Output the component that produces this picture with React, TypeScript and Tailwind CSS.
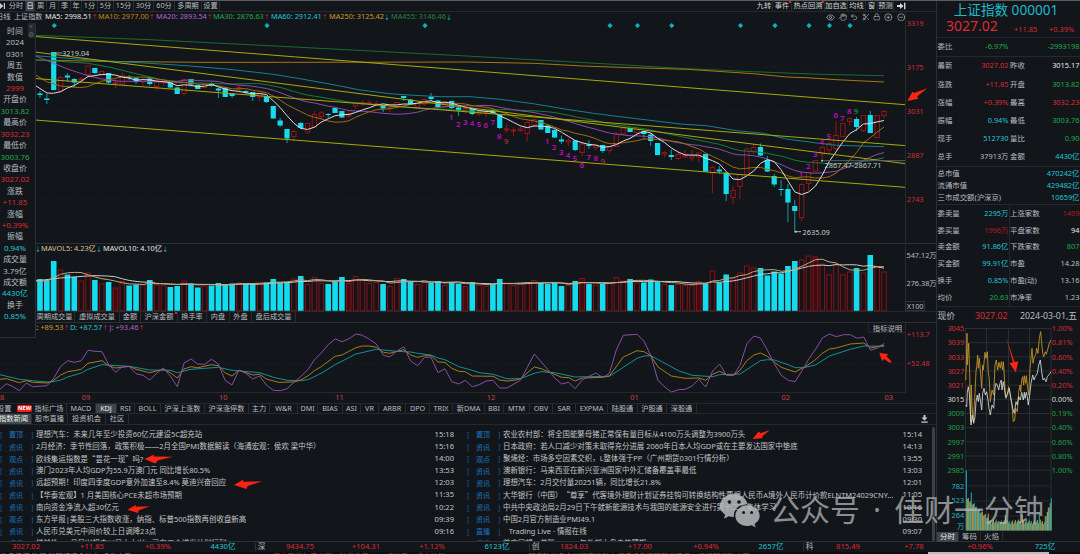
import React from "react";
import clsx from "clsx";
import { CircleMinus, CirclePlus, Eye, Hand, Lock, Scissors, Undo2 } from "lucide-react";

type Point = [number, number];
// [kind, bodyTop, bodyBottom, high, low, volumeTop]
type Candle = ["u" | "d", number, number, number, number, number];

const STEP = 6.862;
const FIRST = -3;
const xOf = (i: number) => 53.7 + (i + FIRST) * STEP;

const candles: Candle[] = [
  ["d", 84, 96, 84, 96, 282], ["d", 93.5, 95, 91, 98, 279], ["d", 98.5, 100, 94, 104, 280],
  ["d", 52, 90, 52, 90, 261], ["u", 77.5, 91, 76, 92, 269.5], ["d", 75.5, 77.5, 73, 82, 274.5],
  ["d", 79, 82.5, 78, 87, 277], ["u", 79, 80, 77, 83, 280.5], ["u", 66, 74.5, 66, 75, 272.5],
  ["d", 68, 73, 68, 74, 280], ["u", 71.5, 75, 71, 75, 283.5], ["d", 73, 82.5, 73, 84, 282],
  ["u", 82.5, 83.5, 79, 88.5, 287.5], ["u", 76, 84, 72.5, 86, 281], ["d", 77, 78, 75, 80, 285.5],
  ["d", 78, 82, 77, 84, 284.5], ["u", 79.5, 82, 78, 86, 284.5], ["d", 78.5, 84, 77, 86, 280],
  ["u", 82, 86.5, 79, 90.5, 284.5], ["u", 81, 83, 80, 86, 284.5], ["d", 82.5, 87.5, 82, 88, 287],
  ["d", 87.5, 94, 87, 94, 286], ["u", 79.5, 93.5, 79, 95.5, 280.5], ["d", 79, 84.5, 79, 86.5, 283.5],
  ["d", 85, 89, 85, 89, 287.5], ["u", 83.5, 87.5, 83, 88, 285.5], ["d", 83.5, 86, 82, 87, 285.5],
  ["d", 88.5, 90.5, 87, 98, 283], ["d", 87.5, 97, 87, 97, 284.5], ["d", 93.5, 96, 93, 98, 283.5],
  ["u", 87.5, 89.5, 86, 92, 282.5], ["d", 91, 92.5, 90, 94, 284], ["d", 92, 97, 92, 101, 283],
  ["u", 94, 97, 93, 101, 283], ["d", 96, 102, 96, 103, 282.5], ["d", 106, 118.5, 106, 118.5, 279],
  ["d", 120.5, 125.5, 118, 127, 283], ["d", 129, 138.5, 129, 143, 282], ["u", 131.5, 136.5, 130, 141, 278.5],
  ["d", 123, 128, 122, 129, 276], ["u", 123.5, 132, 123, 134, 284], ["u", 114.5, 127, 111, 128, 277],
  ["u", 113, 116.5, 111, 119, 283], ["d", 114, 115, 113, 118, 284], ["d", 108, 113, 108, 113, 281],
  ["d", 111, 117.5, 111, 118, 277], ["u", 114, 116, 110, 118, 283], ["u", 102.5, 106, 102, 109, 276],
  ["u", 102.5, 104, 100, 106, 280], ["u", 102.5, 103.5, 100, 105, 283], ["u", 103.5, 105, 101, 106, 282],
  ["d", 105.5, 108.5, 105, 112, 284], ["u", 107.5, 108.5, 106, 112, 286], ["u", 102.5, 107, 102, 107, 278],
  ["d", 96, 98, 96, 101, 279], ["d", 99.5, 104, 99, 104, 281], ["u", 103.5, 107, 103, 108, 284],
  ["u", 99.5, 104, 98, 106, 282], ["d", 96.5, 99, 93, 101, 283], ["d", 100.5, 107, 100, 107, 281],
  ["u", 102, 107, 101, 108, 285], ["d", 101, 108, 101, 109, 282], ["d", 107.5, 110.5, 107, 116, 284],
  ["u", 108.5, 110, 106, 114, 286], ["d", 108, 114, 108, 115, 282], ["u", 112, 114, 111, 116, 285],
  ["u", 112, 113, 109, 117, 286], ["d", 110.5, 113, 109, 114, 284], ["d", 115, 128, 115, 129, 279],
  ["u", 129, 130, 124, 133, 283], ["u", 130, 131, 127, 136, 285], ["u", 129, 130.5, 127, 132, 284],
  ["u", 122.5, 133.5, 121.5, 141.5, 282], ["u", 119.5, 125, 119, 126, 280], ["d", 120, 129.5, 120, 130, 283],
  ["d", 125.5, 133, 125, 133, 284], ["d", 130, 137.5, 129, 138, 283], ["d", 139.5, 141.5, 135.5, 144, 286],
  ["u", 140.5, 142, 138, 146, 285], ["d", 140.5, 150, 140, 151, 281], ["u", 144, 152.5, 143, 156, 278],
  ["d", 144.5, 146, 140, 149, 284], ["u", 145, 147.5, 144, 150, 285], ["d", 145, 151, 145, 153, 284],
  ["u", 147, 150.5, 146, 153.5, 283], ["u", 134, 146.5, 132, 147, 277], ["u", 128, 134, 127, 135, 280.5],
  ["d", 128, 132, 127, 132, 279], ["u", 129.5, 132.5, 129, 134, 282.5], ["d", 131, 134, 131, 139, 282.5],
  ["d", 134.5, 141, 133, 146, 279.5], ["d", 143, 155, 143, 155, 282], ["u", 152.5, 154, 151, 157, 284],
  ["d", 155, 157, 149.5, 160, 285], ["u", 154.5, 158.5, 153, 160, 284], ["u", 155.5, 157, 150, 158, 285],
  ["u", 156, 158, 150, 161, 285], ["u", 153, 157, 152, 162, 281], ["d", 154, 171.5, 154, 172, 283.5],
  ["u", 167.5, 173, 166, 193, 270.5], ["d", 169.5, 171.5, 166, 174, 282.5], ["d", 172.5, 194, 172, 201, 274.5],
  ["u", 190.5, 197.5, 186, 204, 278], ["u", 174.5, 186.5, 174, 199, 272.5], ["u", 149, 174.5, 148, 175, 265.5],
  ["u", 147.5, 151, 144, 154, 267.5], ["d", 147, 155.5, 143.5, 156, 268], ["d", 160, 171.5, 156, 172, 275.5],
  ["d", 176, 184.5, 174, 187, 271.5], ["d", 189, 190, 180, 196, 273.5], ["d", 189, 202.5, 184, 222, 266],
  ["d", 206, 211, 200, 231.5, 261], ["u", 184.5, 217.5, 183, 221, 259.5], ["u", 172.5, 183.5, 172, 190.5, 255.5],
  ["u", 160.5, 171, 160, 172, 256.5], ["u", 147.5, 154, 146, 160, 263.5], ["u", 143.5, 150, 142, 154, 274.5],
  ["u", 135.5, 148.5, 121, 150, 264.5], ["u", 123.5, 136.5, 123, 137, 274.5], ["u", 118.5, 121.5, 117, 126, 271.5],
  ["d", 119, 127, 117, 131, 268], ["u", 115.5, 130.5, 115, 132, 272.5], ["d", 115, 133, 111, 133, 255],
  ["u", 115.5, 137.5, 115, 138, 266.5], ["u", 111.5, 115.5, 110, 119, 271.5],
];

const closes = candles.map((c) => (c[0] === "u" ? c[1] : c[2]));
const volumes = candles.map((c) => c[5]);

// moving average; `head` holds the stretch that needs older data
const average = (values: number[], n: number, head: Point[]): Point[] => [
  ...head,
  ...values
    .map((_, i): Point => {
      const part = values.slice(Math.max(0, i - n + 1), i + 1);
      return [xOf(i), part.reduce((a, b) => a + b, 0) / part.length];
    })
    .slice(n - 1),
];

const line = (points: Point[]) => points.map(([x, y]) => `${x.toFixed(1)},${y.toFixed(1)}`).join(" ");

const pts = (s: string, ox: number, oy: number, sx = 3, sy = 3): Point[] =>
  s.split(" ").map((p) => {
    const [x, y] = p.split(",").map(Number);
    return [ox + x / sx, oy + y / sy];
  });

const averages = [
  { color: "#1b6a33", data: pts("105,106 450,119 900,142 1400,168 1860,194 2060,206 2260,215 2460,223 2652,227", 0, 0) },
  { color: "#a5760f", data: pts("105,180 300,184 600,187 900,187 1400,186 1600,190 1750,198 1860,202 2060,208 2260,221 2360,231 2420,233 2510,239 2652,246", 0, 0) },
  { color: "#14808f", data: pts("105,167 300,182 420,188 560,197 700,209 820,223 900,236 1010,256 1080,270 1170,281 1240,286 1320,290 1410,290 1500,298 1600,311 1700,328 1780,340 1860,350 1950,361 2040,372 2120,377 2210,392 2290,400 2360,417 2450,429 2510,436 2652,440", 0, 0) },
  { color: "#167d39", data: average(closes, 30, pts("105,180 180,184 264,190 330,202 400,219 480,238 540,246 570,248 590,249", 0, 0)) },
  { color: "#8a4ca8", data: average(closes, 20, pts("105,167 161,190 200,206 260,226 300,236 360,244 430,244", 0, 0)) },
  { color: "#a36a0c", data: average(closes, 10, pts("105,224 140,245 182,258 240,263 262,260", 0, 0)).filter((_, i) => i !== 5) },
  { color: "#dcdcdc", data: average(closes, 5, pts("105,256 141,279 160,280", 0, 0)) },
];

const trendLines = [
  [36.5, 104.7],
  [52, 163.6],
  [78.5, 145.6],
  [120, 187.3],
];

const counts: [string, number, number, string?][] = [
  ["1", 451.3, 117], ["2", 458.3, 123.7], ["3", 465.3, 122], ["4", 472, 123], ["5", 479, 124], ["6", 485.7, 125],
  ["7", 492.7, 122], ["8", 499.3, 136.3], ["9", 506.3, 140.7, "#b5313a"],
  ["1", 547.3, 140.7], ["2", 554.3, 146.7], ["3", 561.3, 151.7], ["4", 568, 155], ["5", 575, 158.3], ["6", 582, 164.7],
  ["7", 588.7, 156.7], ["8", 595.7, 157.7], ["9", 602.7, 161, "#b5313a"],
  ["1", 801, 174], ["2", 808.3, 166], ["3", 815.3, 154.3], ["4", 821.7, 142], ["5", 828.7, 136], ["6", 835.7, 115.3],
  ["7", 842.3, 117.7], ["8", 849.3, 111.3], ["9", 856, 111.3, "#1c9a45"],
];

const diamonds = [54.3, 267, 425, 610, 637.5, 671.7, 740.5, 775, 809, 829.5, 850];

const kdj = [
  {
    color: "#12909c",
    data: [
      ...pts("0,194 58,208 98,212 150,217 182,210 203,201 244,189 264,178 306,164 388,169 449,180 511,181 532,188 573,178 655,172 696,181 779,188 820,202 861,211 900,212", 0, 310),
      ...pts("20,209 52,190 86,164 137,132 187,118 237,124 271,126 288,130 321,135 338,144 355,149 389,170 422,181 439,188 473,193 507,206 540,206 574,190 591,185 624,188 674,201 758,199 792,172 826,145 843,138 860,137 894,160 927,182 961,196 1011,200 1028,194 1078,192 1112,165 1128,152 1145,149 1162,150 1196,164 1213,173 1235,173 1264,164 1297,138 1348,118 1381,108 1431,109", 300, 310, 2.45),
    ],
  },
  {
    color: "#a67d1c",
    data: [
      ...pts("0,208 20,206 58,218 79,212 98,217 141,219 161,211 182,195 203,185 223,182 244,178 264,160 306,152 326,167 347,174 388,169 408,178 449,188 490,178 511,188 532,204 552,177 573,170 593,173 634,164 655,167 676,189 696,198 717,181 758,195 779,193 799,207 835,217 882,216 900,211", 0, 310),
      ...pts("20,197 35,182 52,170 86,139 103,135 137,113 153,108 170,108 187,112 204,127 220,130 254,119 271,135 288,142 305,137 321,137 338,156 355,157 372,175 389,184 405,185 422,198 473,199 489,210 507,213 530,210 540,206 574,171 591,176 641,202 658,203 674,213 692,204 742,202 758,198 792,141 826,122 843,125 860,138 877,171 910,198 944,205 977,204 994,211 1011,193 1028,184 1045,194 1062,196 1078,181 1095,152 1112,135 1128,129 1145,139 1162,156 1179,172 1213,186 1247,163 1264,148 1280,130 1297,117 1314,114 1348,102 1381,99 1398,114 1431,106", 300, 310, 2.45),
    ],
  },
  {
    color: "#8a4ca8",
    data: [
      ...pts("0,238 19,221 37,229 58,242 79,219 98,230 141,227 161,205 182,169 203,152 223,157 244,152 264,121 285,124 306,125 326,164 347,187 367,170 388,170 408,191 429,196 449,210 470,190 490,174 511,198 532,230 552,159 573,147 593,162 614,163 634,148 655,162 676,212 696,225 717,180 737,190 758,207 779,198 799,225 820,241 841,242 861,236 882,217 900,202", 0, 310),
      ...pts("20,178 35,150 52,129 69,104 86,87 103,95 120,86 137,72 153,76 170,88 187,102 204,136 220,141 237,124 254,110 271,153 288,167 305,142 321,142 338,188 355,176 372,215 389,222 405,211 422,230 439,224 456,213 473,211 489,234 507,234 540,211 557,172 574,132 608,180 624,204 641,222 658,217 674,236 692,209 725,189 742,203 758,190 775,120 792,76 826,73 843,94 860,138 877,212 894,231 910,246 927,239 944,238 961,228 977,208 994,231 1011,183 1028,162 1045,196 1062,196 1078,166 1095,101 1112,78 1128,84 1145,120 1162,161 1179,196 1196,211 1213,215 1230,182 1247,146 1264,116 1280,84 1297,72 1314,80 1331,74 1348,74 1365,85 1381,81 1398,121 1415,114 1431,100", 300, 310, 2.45),
    ],
  },
];

const months: [string, number][] = [
  ["8", 2], ["09", 86], ["10", 223.3], ["11", 339.6], ["12", 491], ["01", 634.5], ["02", 785.7], ["03", 888.7],
];

const dayIndex = pts("107,225 109,180 111,85 112,180 114,150 116,115 119,210 122,350 124,240 126,300 130,350 134,280 138,200 140,185 143,150 145,190 148,160 151,195 155,250 158,180 160,195 165,142 168,160 172,140 175,200 178,225 181,290 186,255 191,270 195,180 199,165 203,195 207,172 211,190 214,170 218,195 220,170 223,210 226,275 231,270 236,245 240,265 245,290 250,350 254,345 257,310 262,320 266,260 270,240 272,260 275,225 278,215 281,240 283,212 287,235 289,212 291,230 296,270 300,190 303,160 306,130 309,175 313,155 317,150 320,130 324,145 328,100 332,80 335,115 338,145 341,155 346,140 349,148 354,130 358,115 363,105", 930, 305);
const dayPrice = pts("107,300 110,305 112,262 115,245 118,265 120,300 123,360 127,330 131,355 135,335 138,290 142,270 145,290 148,265 151,285 155,315 158,265 162,250 166,270 170,260 174,285 177,310 181,330 186,300 191,310 195,250 198,235 202,240 206,255 210,235 214,225 216,255 220,230 224,255 228,280 233,265 238,250 243,285 248,310 253,325 258,290 262,300 266,275 271,285 275,262 280,285 283,262 285,280 289,262 292,275 295,300 299,270 303,235 308,210 312,225 316,215 322,205 326,180 331,165 335,200 339,225 343,220 348,230 352,215 358,208 363,200", 930, 305);

const dayScale: [string, string][] = [
  ["3045", "1.00%"], ["3039", "0.81%"], ["3033", "0.60%"], ["3027", "0.40%"], ["3021", "0.20%"], ["3015", "0.00%"],
  ["3009", "0.19%"], ["3003", "0.40%"], ["2997", "0.60%"], ["2991", "0.80%"], ["2985", "1.00%"],
];

const dayVolumes = Array.from({ length: 86 }, (_, i) => {
  if (i === 0) return 60;
  const base = i < 24 ? 31 - i * 1.0 : i > 78 ? 8 + (i - 78) * 2.8 : 6.5;
  return base + ((i * 37) % 11) * 0.45 + (i % 17 === 5 ? 8 : 0);
});

const RED = "text-[#dd2932]";
const GREEN = "text-[#1dab4b]";
const CYAN = "text-[#23c4d4]";
const GRAY = "text-[#b9bdc0]";
const WHITE = "text-[#e4e6e7]";

const periods: [string, string][] = [
  ["分时", "w-[19px]"], ["日", "w-[9px]"], ["周", "w-[12px]"], ["月", "w-[12px]"], ["季", "w-[12px]"], ["年", "w-[11px]"],
  ["1分", "w-[16px]"], ["5分", "w-[16px]"], ["15分", "w-[20px]"], ["30分", "w-[20px]"], ["60分", "w-[21px]"],
  ["多周期", "w-[27px]"], ["设置", "w-[18px]"],
];

const tools: [string, string, boolean?][] = [
  ["九转", "w-[17px]"], ["事件", "w-[19px]", true], ["热点回溯", "w-[33px]", true], ["加自选", "w-[23px]"], ["均线", "w-[18px]"],
  ["窗", "w-[12px]"], ["预测", "w-[16px]"],
];

const legend: [string, string, string, string][] = [
  ["MA5: 2998.51", "↑", "text-[#e4e6e7]", "w-[53px]"],
  ["MA10: 2977.00", "↑", "text-[#c9840f]", "w-[58px]"],
  ["MA20: 2893.54", "↑", "text-[#b263d4]", "w-[57px]"],
  ["MA30: 2876.63", "↑", "text-[#1dab4b]", "w-[58px]"],
  ["MA60: 2912.41", "↑", "text-[#23c4d4]", "w-[58px]"],
  ["MA250: 3125.42", "↓", "text-[#d39a26]", "w-[62px]"],
  ["MA455: 3146.46", "↓", "text-[#1f8640]", "w-[70px]"],
];

const cursorInfo: [string, string][] = [
  ["时间", GRAY], ["2024", GRAY], ["0301", GRAY], ["周五", GRAY], ["数值", GRAY], ["2999", RED],
  ["开盘价", GRAY], ["3013.82", GREEN], ["最高价", GRAY], ["3032.23", RED], ["最低价", GRAY], ["3003.76", GREEN],
  ["收盘价", GRAY], ["3027.02", RED], ["涨跌", GRAY], ["+11.85", RED], ["涨幅", GRAY], ["+0.39%", RED],
  ["振幅", GRAY], ["0.94%", CYAN], ["成交量", GRAY], ["3.79亿", GRAY], ["成交额", GRAY], ["4430亿", CYAN],
  ["换手", GRAY], ["0.85%", CYAN],
];

const volumeTabs: [string, string, boolean?][] = [
  ["周期成交量", "w-[40px]"], ["虚拟成交量", "w-[45px]"], ["金额", "w-[21px]"], ["沪深金额", "w-[37px]", true],
  ["换手率", "w-[29px]"], ["内盘", "w-[23px]"], ["外盘", "w-[22px]"], ["盘后成交量", "w-[44px]"],
];

const indicators: [string, string][] = [
  ["MACD", "w-[29px]"], ["KDJ", "w-[21px]"], ["RSI", "w-[18px]"], ["BOLL", "w-[26px]"], ["沪深上涨数", "w-[44px]"],
  ["沪深涨停数", "w-[44px]"], ["主力", "w-[21px]"], ["W&R", "w-[28px]"], ["DMI", "w-[20px]"], ["BIAS", "w-[25px]"],
  ["ASI", "w-[18px]"], ["VR", "w-[18px]"], ["ARBR", "w-[27px]"], ["DPO", "w-[24px]"], ["TRIX", "w-[23px]"],
  ["新DMA", "w-[32px]"], ["BBI", "w-[19px]"], ["MTM", "w-[26px]"], ["OBV", "w-[23px]"], ["SAR", "w-[23px]"],
  ["EXPMA", "w-[32px]"], ["陆股通", "w-[30px]"], ["沪股通", "w-[29px]"], ["深股通", "w-[30px]"],
];

const newsLeft: [string, string, string][] = [
  ["置顶", "理想汽车：未来几年至少投资60亿元建设5C超充站", "15:18"],
  ["资讯", "2月经济：季节性回落，政策积极——2月全国PMI数据解读（海通宏观：侯欢 梁中华）", "15:16"],
  ["观点", "欧线集运指数是“昙花一现”吗?", "14:00"],
  ["资讯", "澳门2023年人均GDP为55.9万澳门元 同比增长80.5%", "13:53"],
  ["资讯", "远超预期！印度四季度GDP意外加速至8.4% 莫迪兴奋回应", "12:03"],
  ["资讯", "【华泰宏观】1 月美国核心PCE未超市场预期", "11:35"],
  ["资讯", "南向资金净流入超30亿元", "10:22"],
  ["观点", "东方早报|美股三大指数收涨，纳指、标普500指数再创收盘新高", "09:39"],
  ["资讯", "人民币兑美元中间价较上日调降23点", "09:16"],
  ["资讯", "悦龄性：V月又兴捐未以日本大兴，已有五个增发计划行列", "09:02"],
];

const newsRight: [string, string, string][] = [
  ["置顶", "农业农村部：将全国能繁母猪正常保有量目标从4100万头调整为3900万头", "15:14"],
  ["资讯", "日本政府：若人口减少对策未取得充分进展 2060年日本人均GDP或在主要发达国家中垫底", "14:13"],
  ["观点", "聚烯烃：市场多空因素交织，L整体强于PP（广州期货0301行情分析）", "13:55"],
  ["资讯", "澳新银行：马来西亚在新兴亚洲国家中外汇储备覆盖率最低", "13:03"],
  ["资讯", "理想汽车：2月交付量20251辆，同比增长21.8%", "12:01"],
  ["资讯", "大华银行（中国）“尊享”代客境外理财计划证券挂钩可转换结构性票据人民币A境外人民币计价款ELNTM24029CNY...", "11:05"],
  ["资讯", "中共中央政治局2月29日下午就新能源技术与我国的能源安全进行第十二次集体学习", "10:16"],
  ["资讯", "中国2月官方制造业PMI49.1", "09:30"],
  ["直播", "   Trading Live · 情报在线", "09:07"],
  ["资讯", "首席展望，美股：2024年外部大盘走势预期", "08:59"],
];

const quotes: [string, string, string, string, string, string][] = [
  ["最新", "3027.02", RED, "昨收", "3015.17", WHITE],
  ["涨跌", "+11.85", RED, "开盘", "3013.82", GREEN],
  ["涨幅", "+0.39%", RED, "最高", "3032.23", RED],
  ["振幅", "0.94%", CYAN, "最低", "3003.76", GREEN],
  ["现手", "512730", CYAN, "量比", "0.90", GREEN],
  ["总手", "37913万", GRAY, "金额", "4430亿", CYAN],
];

const totals: [string, string][] = [
  ["总市值", "470242亿"],
  ["流通市值", "429482亿"],
  ["三市成交额(沪深京)", "10659亿"],
];

const breadth: [string, string, string, string, string, string][] = [
  ["委卖量", "2295万", CYAN, "上涨家数", "1409", "text-[#b8181f]"],
  ["委买量", "1996万", "text-[#b8181f]", "平盘家数", "94", WHITE],
  ["卖金额", "91.86亿", CYAN, "下跌家数", "807", GREEN],
  ["买金额", "99.91亿", CYAN, "市盈", "14.28", GRAY],
  ["换手", "0.85%", CYAN, "市盈(动)", "13.16", GRAY],
  ["均价", "20.63", GREEN, "市净率", "1.23", GRAY],
];

const markets: [string, string, string, string, string][] = [
  ["沪", "3027.02", "+11.85", "+0.39%", "4430亿"],
  ["深", "9434.75", "+104.31", "+1.12%", "6123亿"],
  ["创", "1824.03", "+17.00", "+0.94%", "2657亿"],
  ["科", "815.49", "+7.78", "+0.96%", "725亿"],
];

interface TabProps {
  label: string;
  width: string;
  active?: boolean;
  dot?: boolean;
  className?: string;
}

function Tab({ label, width, active, dot, className }: TabProps) {
  return (
    <div
      className={clsx(
        "relative flex h-full shrink-0 items-center justify-center overflow-hidden whitespace-nowrap border-r border-[#272c30]",
        active ? "bg-[#3d444b] text-[#eceeef]" : "text-[#b9bdc0]",
        width,
        className,
      )}
    >
      {label}
      {dot && <span className="absolute right-0 top-0 size-[2px] bg-[#ee1c1c]" />}
    </div>
  );
}

function Toolbar() {
  return (
    <div className="flex h-[11px] shrink-0 items-center border-b border-[#24292d] pr-[30px] text-[7.2px]">
      <div className="flex w-[7px] shrink-0 items-center">
        <svg className="h-[8px] w-[6px]" viewBox="0 0 6 8" fill="#c9cccf">
          <path d="M0 1l3.4 3L0 7zM3.8 1h1.2v6H3.8z" />
        </svg>
      </div>
      {periods.map(([label, width]) => (
        <Tab key={label} label={label} width={width} active={label === "日"} />
      ))}
      <div className="ml-auto flex h-full items-center">
        {tools.map(([label, width, dot]) => (
          <Tab key={label} label={label} width={width} dot={dot} className="text-[#d0d3d5]" />
        ))}
        <svg className="ml-[3px] h-[8px] w-[9px]" viewBox="0 0 9 8" fill="#d6d8d9">
          <path d="M0 3.1h3V1l3.6 3L3 7V4.9H0zM7 .8h1.400v6.400H7z" />
        </svg>
      </div>
    </div>
  );
}

function Legend() {
  return (
    <div className="flex h-[10px] shrink-0 items-center overflow-hidden whitespace-nowrap text-[7.35px]">
      <span className="-ml-[4px] w-[18px] shrink-0 text-[#b9bdc0]">日线</span>
      <span className="w-[31px] shrink-0 text-[7.1px] text-[#b9bdc0]">上证指数</span>
      {legend.map(([text, arrow, color, width]) => (
        <span key={text} className={clsx("shrink-0", color, width)}>
          {text}
          <span className={clsx("text-[6px]", arrow === "↑" ? "text-[#dd2932]" : "text-[#23c4d4]")}>{arrow}</span>
        </span>
      ))}
      <div className="ml-auto mr-[31px] flex items-center gap-[3.6px] text-[#a9adb0]">
        <Eye size={9} strokeWidth={2} />
        <Hand size={8} strokeWidth={2} />
        <Undo2 size={8} strokeWidth={2} />
        <Scissors size={8} strokeWidth={2} />
        <Lock size={7.5} strokeWidth={2} />
        <CirclePlus size={8.5} strokeWidth={2} />
        <CircleMinus size={8.5} strokeWidth={2} />
      </div>
    </div>
  );
}

function CandleChart() {
  return (
    <svg className="block h-[221px] w-[936px] shrink-0 overflow-visible" viewBox="0 22 936 221" fontSize="7.4">
      {[67.3, 111.3, 155.5, 199.3].map((y) => (
        <line key={y} x1="35" x2="905" y1={y} y2={y} stroke="#1c2226" strokeDasharray="1 2" />
      ))}
      <line x1="905.5" x2="905.5" y1="12" y2="243" stroke="#262b2f" />
      {diamonds.map((x) => (
        <path key={x} d={`M${x} 23l2.600 2.600l-2.600 2.600l-2.600 -2.600z`} fill="#0fb0bd" />
      ))}
      {candles.map(([kind, top, bottom, high, low], i) => {
        const x = xOf(i);
        const height = Math.max(bottom - top, 1);
        return kind === "d" ? (
          <g key={i}>
            <line x1={x} x2={x} y1={high} y2={low} stroke="#159aa6" />
            <rect x={x - 2.6} y={top} width="5.2" height={height} fill="#14dcee" />
          </g>
        ) : (
          <g key={i} stroke="#971319">
            <line x1={x} x2={x} y1={high} y2={low} />
            <rect x={x - 2.2} y={top} width="4.4" height={height} fill="#12161a" />
          </g>
        );
      })}
      {averages.map(({ color, data }) => (
        <polyline key={color} points={line(data)} fill="none" stroke={color} strokeLinejoin="round" />
      ))}
      {trendLines.map(([from, to]) => (
        <line key={from} x1="35" x2="905" y1={from} y2={to} stroke="#a9a90b" />
      ))}
      {counts.map(([n, x, y, color], i) => (
        <text key={i} x={x} y={y + 2.8} textAnchor="middle" fontSize="7.8" fontWeight="500" fill={color ?? "#d20ad2"}>
          {n}
        </text>
      ))}
      <path d="M56 53h6" stroke="#9a9ea1" />
      <text x="62" y="56" fill="#c4c7c9">3219.04</text>
      <path d="M795 231.700h6" stroke="#b5b8ba" />
      <circle cx="795.5" cy="231.7" r="1" fill="#d6d8d9" />
      <text x="802.5" y="234.6" fill="#c4c7c9">2635.09</text>
      <path d="M821 160.700h84" stroke="#5b6165" />
      <circle cx="822" cy="160.7" r="1" fill="#b5b8ba" />
      <text x="824.5" y="168.3" fill="#c4c7c9">2867.47-2867.71</text>
      {["3319", "3175", "3031", "2887", "2743"].map((label, i) => (
        <text key={label} x="906.7" y={26 + i * 44.1} fill="#d02a32">
          {label}
        </text>
      ))}
    </svg>
  );
}

function VolumeChart() {
  return (
    <svg className="block h-[58px] w-[936px] shrink-0 overflow-visible" viewBox="0 254 936 58" fontSize="7.3">
      <line x1="905.5" x2="905.5" y1="243" y2="312" stroke="#262b2f" />
      {candles.map(([kind, , , , , top], i) =>
        kind === "d" ? (
          <rect key={i} x={xOf(i) - 2.8} y={top} width="5.6" height={310.8 - top} fill="#14dcee" />
        ) : (
          <rect
            key={i}
            x={xOf(i) - 2.3}
            y={top + 0.5}
            width="4.6"
            height={310.3 - top}
            fill={i % 17 === 12 ? "#46090d" : "#161215"}
            stroke="#85131a"
          />
        ),
      )}
      <polyline points={line(average(volumes, 10, [[35, 281], [60, 278], [80, 276.5]]))} fill="none" stroke="#c9c9c9" />
      <polyline points={line(average(volumes, 5, [[35, 281], [47, 281]]))} fill="none" stroke="#bda878" />
      <line x1="35" x2="936" y1="311.5" y2="311.5" stroke="#24292d" />
      <text x="906.5" y="258.4" fill="#b9bdc0">547.12万</text>
      <text x="906.5" y="285.8" fill="#b9bdc0">276.38万</text>
      <rect x="905.5" y="301.5" width="19" height="9" fill="none" stroke="#2d3337" />
      <text x="906.7" y="308.9" fill="#b9bdc0">X100</text>
    </svg>
  );
}

function KdjChart() {
  return (
    <svg className="block h-[70px] w-[936px] shrink-0 overflow-visible" viewBox="0 333 936 70" fontSize="7.4">
      <line x1="0" x2="905" y1="363.5" y2="363.5" stroke="#1c2226" strokeDasharray="1 2" />
      <line x1="905.5" x2="905.5" y1="322" y2="393" stroke="#262b2f" />
      <line x1="0" x2="905" y1="392.5" y2="392.5" stroke="#24292d" />
      {kdj.map(({ color, data }) => (
        <polyline key={color} points={line(data)} fill="none" stroke={color} strokeWidth="1" />
      ))}
      <text x="906.7" y="337" fill="#d02a32">+113.7</text>
      <text x="906.7" y="366.2" fill="#d02a32">+52.48</text>
      {months.map(([label, x]) => (
        <text key={label} x={x} y="400.4" textAnchor="middle" fill="#c4434b">
          {label}
        </text>
      ))}
    </svg>
  );
}

function CursorPanel() {
  return (
    <div className="absolute left-0 top-[23px] flex h-[315px] w-[35.5px] border-b border-r border-[#2b3034] bg-[#12161a]">
      <div className="flex w-[30px] flex-col pt-[3.3px]">
        {cursorInfo.map(([text, color], i) => (
          <div key={i} className={clsx("flex h-[11.41px] items-center justify-center whitespace-nowrap text-[7.9px]", color)}>
            {text}
          </div>
        ))}
      </div>
      <div className="absolute right-0 top-0 flex flex-col items-center bg-[#23282c] text-[7px] text-[#5d6469]">
        <span className="flex h-[7.5px] w-[7px] items-center justify-center">×</span>
        <span className="flex h-[7.5px] w-[7px] items-center justify-center">⚙</span>
      </div>
    </div>
  );
}

// quotation marks take the full-width CJK glyphs
function Title({ text }: { text: string }) {
  return (
    <span className="shrink-0">
      {text.split(/([“”])/).map((part, i) =>
        part === "“" || part === "”" ? (
          <span
            key={i}
            className={clsx("inline-block w-[7.4px] font-['Noto_Sans_CJK_SC',sans-serif]", part === "“" && "text-right")}
          >
            {part}
          </span>
        ) : (
          part
        ),
      )}
    </span>
  );
}

function NewsColumn({ items, className }: { items: [string, string, string][]; className?: string }) {
  return (
    <div className={clsx("flex flex-col overflow-hidden pt-[4px] text-[7.44px]", className)}>
      {items.map(([tag, title, time]) => (
        <div key={title} className="flex h-[12.05px] shrink-0 items-center whitespace-pre text-[#c2c5c7]">
          <span className="w-[9px] text-[#15578e]">[</span>
          <span className="w-[22px] text-[7.1px] text-[#1a72bd]">{tag}</span>
          <span className="w-[5px] text-[#15578e]">]</span>
          <Title text={title} />
          <span className="ml-auto text-[7.6px]">{time}</span>
        </div>
      ))}
    </div>
  );
}

interface QuoteRowProps {
  row: [string, string, string, string, string, string];
  className: string;
  divided?: boolean;
}

function QuoteRow({ row, className, divided }: QuoteRowProps) {
  const [label, value, color, label2, value2, color2] = row;
  return (
    <div className={clsx("flex items-center whitespace-nowrap", className)}>
      <div className="flex w-[71px] justify-between">
        <span>{label}</span>
        <span className={color}>{value}</span>
      </div>
      <div
        className={clsx(
          "flex h-full flex-1 items-center justify-between border-l pl-[0.5px]",
          divided ? "border-[#24292d]" : "border-transparent",
        )}
      >
        <span>{label2}</span>
        <span className={color2}>{value2}</span>
      </div>
    </div>
  );
}

function DayChart() {
  return (
    <svg className="block h-[209px] w-[143px] shrink-0" viewBox="937 323 143 209" fontSize="7.4">
      {dayScale.map(([price, percent], i) => {
        const y = 328.5 + i * 14.17;
        const fill = i < 5 ? "#d62a33" : i === 5 ? "#d6d8d9" : "#1da048";
        return (
          <g key={price}>
            <line x1="965" x2="1051" y1={y} y2={y} stroke="#292e32" />
            <text x="964.3" y={y + 2.8} textAnchor="end" fill={fill}>
              {price}
            </text>
            <text x="1051.8" y={y + 2.8} fill={fill}>
              {percent}
            </text>
          </g>
        );
      })}
      {[486, 501, 516].map((y) => (
        <line key={y} x1="965" x2="1051" y1={y} y2={y} stroke="#23282c" />
      ))}
      {[965.5, 986.5, 1008.5, 1029.5, 1051].map((x) => (
        <line key={x} x1={x} x2={x} y1="328" y2="531" stroke="#292e32" />
      ))}
      {dayVolumes.map((h, i) => (
        <rect
          key={i}
          x={965.8 + i}
          y={530.6 - h}
          width="1"
          height={h}
          fill={i === 0 || (i * 7) % 5 < 2 ? "#14b4c6" : i % 6 === 3 ? "#a9b89a" : "#d0a238"}
        />
      ))}
      <polyline points={line(dayIndex)} fill="none" stroke="#c8972a" strokeWidth="0.85" />
      <polyline points={line(dayPrice)} fill="none" stroke="#d8dadb" strokeWidth="0.85" />
      {[["782", 488.6], ["523", 503.4], ["264", 518.3], ["万", 529.2]].map(([label, y]) => (
        <text key={label} x="964.3" y={y} textAnchor="end" fill="#23b8c8">
          {label}
        </text>
      ))}
    </svg>
  );
}

function Sidebar() {
  return (
    <aside className="flex w-[144px] shrink-0 flex-col border-l border-[#2b3034] text-[7.4px] text-[#b9bdc0]">
      <div className="flex h-[18px] shrink-0 items-center justify-center whitespace-pre pr-[5px] text-[13.6px] text-[#20b9cb]">
        上证指数 000001
      </div>
      <div className="flex h-[18px] shrink-0 items-center pl-[9px] text-[#dd2932]">
        <span className="w-[68px] pb-[4px] text-[14px]">3027.02</span>
        <span className="w-[35px] pt-[3px]">+11.85</span>
        <span className="pt-[3px]">+0.39%</span>
      </div>
      <div className="flex h-[20px] shrink-0 items-center border-y border-[#24292d] pl-[0.5px] pr-[0.5px]">
        <div className="flex w-[71px] justify-between">
          <span>委比</span>
          <span className={GREEN}>-6.97%</span>
        </div>
        <span className={clsx("ml-auto", GREEN)}>-2993198</span>
      </div>
      <div className="flex h-[110px] shrink-0 flex-col border-b border-[#24292d] px-[0.5px]">
        {quotes.map((row) => (
          <QuoteRow key={row[0]} row={row} className="h-[18.4px]" />
        ))}
      </div>
      <div className="flex h-[38px] shrink-0 flex-col border-b border-[#24292d] px-[0.5px] pt-[0.5px]">
        {totals.map(([label, value]) => (
          <div key={label} className="flex h-[12.3px] items-center justify-between">
            <span>{label}</span>
            <span className={CYAN}>{value}</span>
          </div>
        ))}
      </div>
      <div className="flex h-[102px] shrink-0 flex-col border-b border-[#24292d] px-[0.5px]">
        {breadth.map((row) => (
          <QuoteRow key={row[0]} row={row} className="h-[17px]" divided />
        ))}
      </div>
      <div className="flex h-[16px] shrink-0 items-center overflow-hidden whitespace-nowrap pl-[0.5px] pt-[2px] text-[8.8px]">
        <span className="w-[37.5px]">现价</span>
        <span className="w-[45px] text-[#dd2932]">3027.02</span>
        <span>2024-03-01,五</span>
      </div>
      <DayChart />
      <div className="flex h-[10px] shrink-0">
        <Tab label="分时" width="w-[22px]" active />
        <Tab label="筹码" width="w-[22px]" />
        <Tab label="火焰" width="w-[22px]" />
      </div>
    </aside>
  );
}

function StatusBar() {
  return (
    <div className="flex h-[11px] shrink-0 overflow-hidden border-t border-[#2b3034] text-[7.6px]">
      <div className="-ml-[19px] flex">
        {markets.map(([name, index, change, percent, amount]) => (
          <div key={name} className="flex w-[274px] shrink-0 items-center text-center text-[#dd2932]">
            <span className="w-[12px] border-l border-[#2b3034] text-[#b9bdc0]">{name}</span>
            <span className="w-[66px]">{index}</span>
            <span className="w-[66px]">{change}</span>
            <span className="w-[66px]">{percent}</span>
            <span className="w-[64px] text-[#23c4d4]">{amount}</span>
          </div>
        ))}
      </div>
    </div>
  );
}

function Ticker() {
  return (
    <div className="flex h-[2px] shrink-0 overflow-hidden whitespace-nowrap bg-[#0c0f12] text-[7.4px] leading-[8px] text-[#8d9194]">
      <span className="w-[273px] shrink-0">收盘播报 沪深 港股通资金流向 点此查看</span>
      <span className="w-[255px] shrink-0 text-[#77680f]">三大股指午后走强，沪指收复3000点关口，成交放量</span>
      <span className="w-[400px] shrink-0 text-[#77680f]">国务院常务会议研究推动大规模设备更新和消费品以旧换新行动方案</span>
      <span className="h-full w-[121px] shrink-0 bg-[#b9bbbd]" />
    </div>
  );
}

const arrows = [
  "927.3,88.2 914,93 912.5,91.5 907.3,101 918.5,98.8 917,96.5",
  "879.3,352.8 882,361 884,359 890,363 891.5,361.5 886.5,356.3 888.3,354.3",
  "144.5,459 154,454.5 153.5,456.6 173,456.8 157.5,460.5 155.5,463.5",
  "234,485 243.5,479.5 243,481.8 262,481.3 247.5,486 246.5,489",
  "127.5,509.8 136,504.8 135.5,506.8 149.5,506.3 138.5,510.5 138,513",
  "752.5,439.3 758.5,431.5 760.5,433.2 770,430 762,436.5 763,438",
  "1006.2,337 1013,362.5 1009.3,363 1015.8,372.3 1018.3,361.5 1014.5,362",
];

function Annotations() {
  return (
    <svg className="pointer-events-none absolute inset-0 h-[554px] w-[1080px]" viewBox="0 0 1080 554">
      {arrows.map((points) => (
        <polygon key={points} points={points} fill="#fb2414" />
      ))}
    </svg>
  );
}

function Watermark() {
  return (
    <div className="pointer-events-none absolute left-[719px] top-[490px] flex h-[40px] items-center whitespace-nowrap text-[30px] text-[#b4b6b8]/75">
      <svg className="mr-[9px] h-[36px] w-[42px]" viewBox="0 0 42 36">
        <path
          fill="#b9bbbd"
          fillOpacity="0.85"
          fillRule="evenodd"
          d="M15 2C7 2 1 7.2 1 13.7c0 3.700 2 6.900 5.200 9l-1.300 4.100 4.900-2.500c1.600.4 3.300.8 5.100.8-1-6.800 5-13.200 13.500-13.100C27.300 6.200 21.800 2 15 2zM10.400 8.300a1.800 1.800 0 1 1 0 3.600 1.800 1.800 0 0 1 0-3.600zM20 8.300a1.800 1.800 0 1 1 0 3.600 1.800 1.800 0 0 1 0-3.600z"
        />
        <path
          fill="#b9bbbd"
          fillOpacity="0.85"
          fillRule="evenodd"
          d="M28.500 13.500c-7 0-12.200 4.600-12.200 10.200s5.200 10.200 12.200 10.200c1.500 0 2.900-.3 4.200-.6l4 2.200-1.100-3.600c3-1.900 5.100-4.800 5.100-8.200 0-5.600-5.400-10.200-12.200-10.200zM24.600 19a1.500 1.500 0 1 1 0 3 1.500 1.500 0 0 1 0-3zM32.600 19a1.500 1.500 0 1 1 0 3 1.500 1.500 0 0 1 0-3z"
        />
      </svg>
      <span>公众号</span>
      <span className="w-[34px] text-center">·</span>
      <span>佳财一分钟</span>
    </div>
  );
}

export default function App() {
  return (
    <div className="relative flex h-[554px] w-[1080px] flex-col overflow-hidden bg-[#12161a] font-['Noto_Sans','Noto_Sans_CJK_SC',sans-serif] leading-none">
      <div className="h-px shrink-0 bg-[#595e61]" />
      <div className="flex h-[540px] shrink-0">
        <main className="flex w-[936px] shrink-0 flex-col">
          <Toolbar />
          <Legend />
          <CandleChart />
          <div className="flex h-[11px] shrink-0 items-center border-t border-[#2b3034] pl-[35px] text-[7.35px]">
            <span className="w-[6px] text-[6px] text-[#23c4d4]">↓</span>
            <span className="w-[62px] text-[#d9c595]">
              MAVOL5: 4.23亿<span className="text-[6px] text-[#23c4d4]">↓</span>
            </span>
            <span className="text-[#e4e6e7]">
              MAVOL10: 4.10亿<span className="text-[6px] text-[#23c4d4]">↓</span>
            </span>
          </div>
          <VolumeChart />
          <div className="flex h-[10px] shrink-0 pl-[35px] text-[7.2px]">
            {volumeTabs.map(([label, width, dot]) => (
              <Tab key={label} label={label} width={width} dot={dot} />
            ))}
          </div>
          <div className="flex h-[11px] shrink-0 items-center border-t border-[#2b3034] pl-[32px] text-[7.35px]">
            <span className="w-[38px] text-[#d39a26]">
              K: +89.53<span className="text-[6px] text-[#dd2932]">↑</span>
            </span>
            <span className="w-[39.5px] text-[#23c4d4]">
              D: +87.57<span className="text-[6px] text-[#dd2932]">↑</span>
            </span>
            <span className="text-[#b263d4]">
              J: +93.46<span className="text-[6px] text-[#dd2932]">↑</span>
            </span>
            <span className="ml-auto mr-[30px] flex h-full w-[38px] items-center justify-center border-b border-l border-[#24292d] pt-[2px] text-[#b9bdc0]">
              指标说明
            </span>
          </div>
          <KdjChart />
          <div className="flex h-[11px] shrink-0 items-center border-b border-t border-[#24292d] text-[7.2px] text-[#b9bdc0]">
            <span className="-ml-[3px] w-[20px] shrink-0 whitespace-nowrap">设置</span>
            <span className="flex h-[7px] w-[15px] shrink-0 items-center justify-center rounded-[1.5px] bg-[#ee1c1c] text-[5.6px] font-bold text-white">
              NEW
            </span>
            <Tab label="指标广场" width="w-[35px]" />
            {indicators.map(([label, width]) => (
              <Tab key={label} label={label} width={width} active={label === "KDJ"} />
            ))}
          </div>
          <div className="flex h-[11px] shrink-0 items-center border-b border-[#24292d] text-[7.3px]">
            <Tab label="指数新闻" width="w-[32px]" active className="pr-[4px]" />
            <Tab label="股市直播" width="w-[36px]" />
            <Tab label="投资机会" width="w-[38px]" />
            <Tab label="社区" width="w-[23px]" />
            <svg className="ml-auto mr-[8px] h-[8px] w-[7px]" viewBox="0 0 7 8" fill="#c4c7c9">
              <path d="M2.500 0h2v2.500h2L3.500 5.700.5 2.500h2zM.3 6.500h6.400v1.200H.3z" />
            </svg>
          </div>
          <div className="flex h-[116px] shrink-0">
            <NewsColumn items={newsLeft} className="w-[454px]" />
            <NewsColumn items={newsRight} className="ml-[13px] w-[455px]" />
            <div className="ml-auto mr-px mt-[2px] w-[3px] rounded-full bg-[#3a4147]" />
          </div>
        </main>
        <Sidebar />
      </div>
      <StatusBar />
      <Ticker />
      <CursorPanel />
      <Annotations />
      <Watermark />
    </div>
  );
}
